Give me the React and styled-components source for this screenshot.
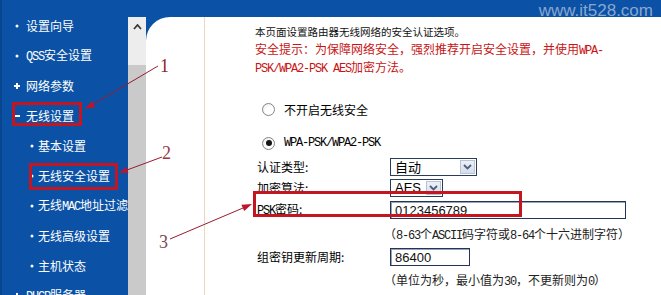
import React from "react";
import styled, { createGlobalStyle } from "styled-components";

const BLUE = "#0b52a6";
const RED_TEXT = "#c81414";
const CJK = `"Noto Sans CJK SC", "Noto Sans", sans-serif`;

const Global = createGlobalStyle`
  html, body { margin: 0; padding: 0; background: #fff; }
  body { font-family: ${CJK}; }
`;

const Page = styled.div`
  position: relative;
  width: 661px;
  height: 295px;
  overflow: hidden;
  display: flex;
  background: ${BLUE};
`;

const Sidebar = styled.nav`
  width: 128px;
  flex: none;
  box-sizing: border-box;
  background: ${BLUE};
  border-left: 2px solid #08468f;
  padding-top: 11px;
  overflow: hidden;
  display: flex;
  flex-direction: column;
`;

const NavItem = styled.div`
  height: 30px;
  flex: none;
  display: flex;
  align-items: center;
  padding-left: ${(p) => (p.$sub ? 25 : 10)}px;
  color: #fff;
  font-size: 12px;
  line-height: 14px;
  white-space: nowrap;
`;

const Marker = styled.span`
  position: relative;
  width: 10px;
  height: 10px;
  flex: none;
  margin-right: ${(p) => (p.$sub ? 1 : 4)}px;
  &::before {
    content: "";
    position: absolute;
    left: 50%;
    top: 50%;
    transform: translate(-50%, -50%);
    background: #fff;
    width: ${(p) => (p.$kind === "dot" ? 3 : 6)}px;
    height: ${(p) => (p.$kind === "dot" ? 3 : 2)}px;
    border-radius: ${(p) => (p.$kind === "dot" ? "50%" : "0")};
  }
  &::after {
    content: ${(p) => (p.$kind === "plus" ? '""' : "none")};
    position: absolute;
    left: 50%;
    top: 50%;
    transform: translate(-50%, -50%);
    background: #fff;
    width: 2px;
    height: 6px;
  }
`;

const Asc = styled.span`
  font-family: "Liberation Mono", "DejaVu Sans Mono", monospace;
  font-size: 12px;
  letter-spacing: -1.2px;
`;

const RightCol = styled.div`
  flex: 1;
  min-width: 0;
  display: flex;
  flex-direction: column;
`;

const TopBar = styled.header`
  height: 17px;
  flex: none;
  display: flex;
  justify-content: flex-end;
  padding-right: 8px;
  position: relative;
  z-index: 1;
`;

const Watermark = styled.span`
  font-family: "Liberation Sans", Arial, sans-serif;
  font-size: 17px;
  line-height: 17px;
  padding-top: 2px;
  color: #8aa6cf;
  height: 17px;
`;

const BodyRow = styled.div`
  flex: 1;
  min-height: 0;
  display: flex;
`;

const ScrollBar = styled.div`
  width: 18px;
  flex: none;
  display: flex;
  flex-direction: column;
  background: #cacaca;
`;

const ScrollTrack = styled.div`
  height: 48px;
  background: #ededed;
  display: flex;
  justify-content: center;
  padding-top: 7px;
  box-sizing: border-box;
`;

const MainFrame = styled.main`
  flex: 1;
  min-width: 0;
  background: ${BLUE};
  display: flex;
`;

const Sheet = styled.div`
  flex: 1;
  background: #fff;
  border-top-left-radius: 24px;
  display: flex;
`;

const Gutter = styled.div`
  width: 58px;
  flex: none;
  border-right: 1px solid #f1d6bb;
`;

const Content = styled.section`
  flex: 1;
  padding: 7px 0 0 50px;
  color: #000;
  font-size: 12px;
  white-space: nowrap;
`;

const Intro = styled.div`
  font-size: 10.5px;
  line-height: 16px;
  color: #111;
`;

const Warning = styled.div`
  margin-top: 1px;
  line-height: 15px;
  color: ${RED_TEXT};
`;

const RadioRow = styled.label`
  display: flex;
  align-items: center;
  height: 20px;
  margin-top: ${(p) => p.$mt}px;
  padding-left: 7px;
  gap: 9px;
`;

const Radio = styled.span`
  width: 13px;
  height: 13px;
  box-sizing: border-box;
  border-radius: 50%;
  border: 1px solid #858585;
  background: radial-gradient(circle at 60% 60%, #ffffff 40%, #e4e4e4 100%);
  display: flex;
  align-items: center;
  justify-content: center;
  &::after {
    content: "";
    width: 6px;
    height: 6px;
    border-radius: 50%;
    background: #151515;
    display: ${(p) => (p.$checked ? "block" : "none")};
  }
`;

const FormRow = styled.div`
  display: flex;
  align-items: center;
  height: 20px;
  margin-top: ${(p) => p.$mt}px;
`;

const Label = styled.span`
  width: 133px;
  padding-left: 2px;
  flex: none;
  line-height: 14px;
`;

const Select = styled.div`
  width: ${(p) => p.$w}px;
  height: 18px;
  box-sizing: border-box;
  border: 1px solid #2a3c5e;
  background: #fff;
  display: flex;
  align-items: stretch;
`;

const SelectValue = styled.span`
  flex: 1;
  padding-left: 4px;
  font-size: 13px;
  line-height: 16px;
  font-family: ${(p) => (p.$latin ? `"Liberation Sans", Arial, sans-serif` : CJK)};
`;

const SelectButton = styled.span`
  width: 15px;
  margin: 1px;
  box-sizing: border-box;
  border: 1px solid #b7c3d6;
  background: linear-gradient(#eef1f6, #d6dde8);
  display: flex;
  align-items: center;
  justify-content: center;
`;

const TextInput = styled.input`
  width: ${(p) => p.$w}px;
  height: 18px;
  box-sizing: border-box;
  margin: 0;
  padding: 0 0 0 4px;
  border: 1px solid #22345a;
  box-shadow: inset 1px 1px 0 #9aa3b3;
  background: #fff;
  font-family: "Liberation Sans", Arial, sans-serif;
  font-size: 13px;
  color: #111;
  outline: none;
`;

const Hint = styled.div`
  margin-top: ${(p) => p.$mt}px;
  padding-left: 129px;
  line-height: 16px;
  color: #222;
`;

const Overlay = styled.svg`
  position: absolute;
  left: 0;
  top: 0;
  pointer-events: none;
`;

const Chevron = ({ w = 8, h = 5, color = "#333", sw = 2 }) => (
  <svg width={w + 2} height={h + 2} viewBox={`-1 -1 ${w + 2} ${h + 2}`}>
    <polyline
      points={`0,${h} ${w / 2},0 ${w},${h}`}
      fill="none"
      stroke={color}
      strokeWidth={sw}
    />
  </svg>
);

const Down = () => (
  <svg width="9" height="6" viewBox="0 0 9 6">
    <polyline points="1,1 4.5,4.5 8,1" fill="none" stroke="#4b5f86" strokeWidth="1.8" />
  </svg>
);

const navItems = [
  { kind: "dot", text: "设置向导" },
  { kind: "dot", text: <><Asc>QSS</Asc>安全设置</> },
  { kind: "plus", text: "网络参数" },
  { kind: "minus", text: "无线设置" },
  { kind: "dot", sub: true, text: "基本设置" },
  { kind: "dot", sub: true, text: "无线安全设置" },
  { kind: "dot", sub: true, text: <>无线<Asc>MAC</Asc>地址过滤</> },
  { kind: "dot", sub: true, text: "无线高级设置" },
  { kind: "dot", sub: true, text: "主机状态" },
  { kind: "plus", text: <><Asc>DHCP</Asc>服务器</> },
];

function Annotations() {
  const line = "#9b1b30";
  const head = "#c0142a";
  const box = "#c31620";
  return (
    <Overlay width="661" height="295" viewBox="0 0 661 295">
      <rect x="13.5" y="103.5" width="67" height="21" fill="none" stroke={box} strokeWidth="3" />
      <rect x="30.5" y="164.5" width="86" height="24" fill="none" stroke={box} strokeWidth="3" />
      <rect x="254.5" y="192.5" width="266" height="23" fill="none" stroke={box} strokeWidth="3" />

      <line x1="158" y1="66" x2="93.5" y2="104" stroke={line} strokeWidth="1" />
      <polygon points="85,109 95.4,107 92,101" fill={head} />
      <text x="160" y="72" fontFamily="Liberation Serif, serif" fontSize="18" fill="#8b1f2a">1</text>

      <line x1="162" y1="157" x2="127" y2="170" stroke={line} strokeWidth="1" />
      <polygon points="119,173 128.4,172.7 126.3,167.1" fill={head} />
      <text x="162" y="159" fontFamily="Liberation Serif, serif" fontSize="18" fill="#983844">2</text>

      <line x1="170" y1="239" x2="243" y2="208" stroke={line} strokeWidth="1" />
      <polygon points="252,204 244.2,211.1 241.4,204.7" fill={head} />
      <text x="159" y="248" fontFamily="Liberation Serif, serif" fontSize="18" fill="#7c4a50">3</text>
    </Overlay>
  );
}

export default function App() {
  return (
    <>
      <Global />
      <Page>
        <Sidebar>
          {navItems.map((it, i) => (
            <NavItem key={i} $sub={it.sub}>
              <Marker $kind={it.kind} $sub={it.sub} />
              <span>{it.text}</span>
            </NavItem>
          ))}
        </Sidebar>
        <RightCol>
          <TopBar>
            <Watermark>www.it528.com</Watermark>
          </TopBar>
          <BodyRow>
            <ScrollBar>
              <ScrollTrack>
                <Chevron w={7} h={4} color="#3a3a3a" sw={1.8} />
              </ScrollTrack>
            </ScrollBar>
            <MainFrame>
              <Sheet>
                <Gutter />
                <Content>
                  <Intro>本页面设置路由器无线网络的安全认证选项。</Intro>
                  <Warning>
                    安全提示：为保障网络安全，强烈推荐开启安全设置，并使用<Asc>WPA-</Asc>
                    <br />
                    <Asc>PSK/WPA2-PSK AES</Asc>加密方法。
                  </Warning>
                  <RadioRow $mt={22}>
                    <Radio />
                    <span>不开启无线安全</span>
                  </RadioRow>
                  <RadioRow $mt={14}>
                    <Radio $checked />
                    <Asc>WPA-PSK/WPA2-PSK</Asc>
                  </RadioRow>
                  <FormRow $mt={4}>
                    <Label>认证类型:</Label>
                    <Select $w={87}>
                      <SelectValue>自动</SelectValue>
                      <SelectButton><Down /></SelectButton>
                    </Select>
                  </FormRow>
                  <FormRow $mt={1}>
                    <Label>加密算法:</Label>
                    <Select $w={53}>
                      <SelectValue $latin>AES</SelectValue>
                      <SelectButton><Down /></SelectButton>
                    </Select>
                  </FormRow>
                  <FormRow $mt={2}>
                    <Label><Asc>PSK</Asc>密码:</Label>
                    <TextInput $w={236} readOnly value="0123456789" />
                  </FormRow>
                  <Hint $mt={6}>
                    （<Asc>8-63</Asc>个<Asc>ASCII</Asc>码字符或<Asc>8-64</Asc>个十六进制字符）
                  </Hint>
                  <FormRow $mt={3}>
                    <Label>组密钥更新周期:</Label>
                    <TextInput $w={80} readOnly value="86400" />
                  </FormRow>
                  <Hint $mt={5}>
                    （单位为秒，最小值为<Asc>30</Asc>，不更新则为<Asc>0</Asc>）
                  </Hint>
                </Content>
              </Sheet>
            </MainFrame>
          </BodyRow>
        </RightCol>
        <Annotations />
      </Page>
    </>
  );
}
